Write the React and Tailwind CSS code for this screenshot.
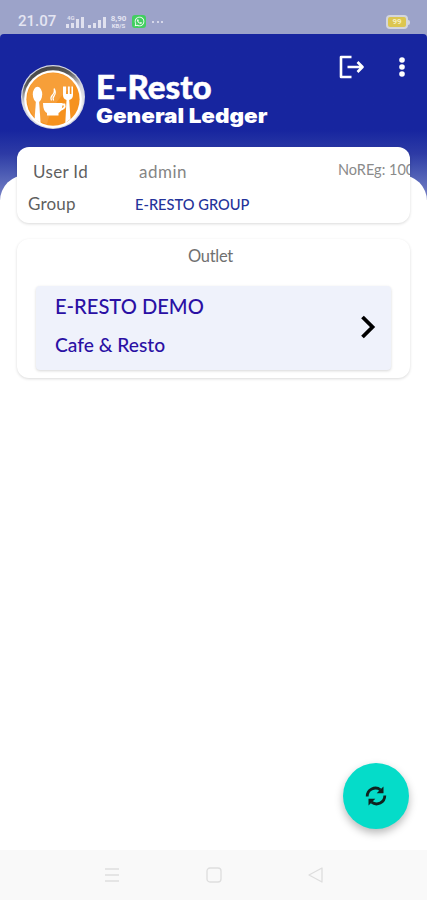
import { FaWhatsapp } from 'react-icons/fa';

function Logo() {
  return (
    <svg viewBox="0 0 66 66" className="h-[66px] w-[66px] shrink-0">
      <defs>
        <linearGradient id="rim" x1="0.2" y1="0" x2="0.5" y2="1">
          <stop offset="0" stopColor="#3f3f3f" />
          <stop offset="0.25" stopColor="#5a5a5a" />
          <stop offset="0.5" stopColor="#d4d4dc" />
          <stop offset="1" stopColor="#fff" />
        </linearGradient>
      </defs>
      <circle cx="33" cy="33" r="32" fill="#d5d7e2" />
      <circle cx="33" cy="33" r="30.8" fill="url(#rim)" />
      <circle cx="33" cy="35" r="28.8" fill="#fff" />
      <circle cx="33" cy="35.2" r="26.6" fill="#f6921e" />
      <path d="M10 23 A26 26 0 0 1 55 21 Q33 35 27 60 A26 26 0 0 1 10 23" fill="#fff" opacity="0.12" />
      <ellipse cx="17.5" cy="30.5" rx="4.7" ry="7.8" fill="#fff" />
      <path d="M16 36h3l1.6 23-6-4z" fill="#fff" />
      <path d="M43 22.5v8.5q0 4 3.5 5L45.3 59l5.2-4-1.3-19q3.8-1 3.8-5v-8.5h-1.6v7.5h-1.6v-7.5h-1.9v7.5h-1.8v-7.5z" fill="#fff" />
      <path d="M23 39h19.5q0 8-4 10v2.5H27V49q-4-2-4-10z" fill="#fff" />
      <path d="M41 40.5h3.5q1.5 4-5 5.5" fill="none" stroke="#fff" strokeWidth="1.8" />
      <path d="M31.5 36.5q-1.5-3 1-5.5t1.6-6.5q2.5 4 0 7.5-1.8 2-.5 4.5" fill="none" stroke="#fff" strokeWidth="1.2" />
    </svg>
  );
}

function Signal({ bars, dotted }) {
  return (
    <svg viewBox="0 0 19 14" className="h-[14px] w-[19px]" fill="#e0e1ef">
      {bars.map((h, i) => (
        <rect key={i} x={i * 5} y={13 - h} width="3" height={h} />
      ))}
      {dotted ? (
        <text x="1" y="5" fontSize="6" fontWeight="700" fontFamily="Roboto, sans-serif">4G</text>
      ) : null}
    </svg>
  );
}

function StatusBar() {
  return (
    <div className="flex h-[34px] items-end justify-between bg-[#9ca3c9] pr-[17px] pb-[5px] pl-[18px]">
      <div className="flex h-[15px] items-center text-[#e4e5f2]">
        <span className="w-[48px] text-[15px] leading-none font-medium [font-family:Roboto,sans-serif]">21.07</span>
        <Signal bars={[4, 5, 9, 11]} dotted />
        <span className="w-[3px]" />
        <Signal bars={[3, 5, 8, 11]} />
        <span className="ml-[3px] flex w-[17px] flex-col items-center text-[8px] leading-[8px] font-bold [font-family:Roboto,sans-serif]">
          <span>8,90</span>
          <span className="text-[6px] leading-[6px]">KB/S</span>
        </span>
        <span className="ml-[5px] flex h-[13px] w-[14px] items-center justify-center rounded-[3px] bg-[#42cf61] text-white">
          <FaWhatsapp className="h-[11px] w-[11px]" />
        </span>
        <span className="ml-[6px] flex gap-[2.5px]">
          <i className="h-[2px] w-[2px] bg-[#d5d7e9]" />
          <i className="h-[2px] w-[2px] bg-[#d5d7e9]" />
          <i className="h-[2px] w-[2px] bg-[#d5d7e9]" />
        </span>
      </div>
      <div className="flex items-center">
        <div className="flex h-[14px] w-[22px] items-center justify-center rounded-[4px] border-2 border-[#d4d6dc] bg-[#dcc650] text-[8px] leading-none font-bold text-[#f6efbf] [font-family:Roboto,sans-serif]">
          99
        </div>
        <div className="h-[5px] w-[2px] rounded-r bg-[#d4d6dc]" />
      </div>
    </div>
  );
}

function Header() {
  return (
    <header className="flex h-[166px] items-start rounded-t-[4px] bg-linear-to-b from-[#17259f] from-58% via-[#2d3aa5] via-72% to-[#7b84c6] pl-[20px] text-white">
      <div className="mt-[30px]">
        <Logo />
      </div>
      <div className="mt-[36px] ml-[10px] w-[180px] whitespace-nowrap">
        <h1 className="origin-left scale-x-[1.035] text-[32px] leading-[34px] font-black [font-family:Lato,sans-serif] [-webkit-text-stroke:0.5px_white]">E-Resto</h1>
        <p className="origin-left scale-x-[1.125] text-[20px] leading-[24px] font-black [font-family:Inter,sans-serif]">General Ledger</p>
      </div>
      <button type="button" aria-label="Logout" className="mt-[21px] ml-[63px]">
        <svg viewBox="0 0 25 24" className="h-[24px] w-[25px]" fill="none" stroke="#fff" strokeWidth="2.6" strokeLinejoin="round">
          <path d="M12.5 2H2v20h10.5M8.5 12H23M18.5 7l5 5-5 5" />
        </svg>
      </button>
      <button type="button" aria-label="Menu" className="mt-[22px] ml-[34px]">
        <svg viewBox="0 0 8 22" className="h-[22px] w-[8px]" fill="#fff">
          <circle cx="4" cy="4" r="2.8" />
          <circle cx="4" cy="11" r="2.8" />
          <circle cx="4" cy="18" r="2.8" />
        </svg>
      </button>
    </header>
  );
}

function UserCard() {
  return (
    <section className="h-[76px] overflow-hidden rounded-[12px] bg-white pt-[9px] whitespace-nowrap text-[#5f5f5f] shadow-[0_1px_3px_rgba(0,0,0,0.15)]">
      <div className="flex h-[32px] items-center text-[17px]">
        <span className="w-[105px] shrink-0 pl-[16px] tracking-[0.35px]">User Id</span>
        <span className="w-[200px] shrink-0 pl-[17px] tracking-[0.5px] text-[#858585]">admin</span>
        <span className="mb-[5px] shrink-0 pl-[16px] text-[14.5px] text-[#8a8a8a]">NoREg: 100</span>
      </div>
      <div className="flex h-[32px] items-center">
        <span className="w-[118px] shrink-0 pl-[11px] text-[17px] tracking-[0.2px]">Group</span>
        <span className="origin-left scale-x-[0.915] text-[16px] font-medium text-[#24339a]">E-RESTO GROUP</span>
      </div>
    </section>
  );
}

function OutletCard() {
  return (
    <section className="mt-[16px] h-[139px] rounded-[12px] bg-white px-[19px] shadow-[0_1px_3px_rgba(0,0,0,0.15)]">
      <h2 className="flex h-[47px] items-start justify-center pt-[5px] pr-[6px] text-[16.5px] tracking-[-0.3px] text-[#707070]">Outlet</h2>
      <button
        type="button"
        className="flex h-[84px] w-full items-center justify-between rounded-[4px] bg-[#eff2fb] pr-[15px] pl-[19px] text-left text-[#2a10a4] shadow-[0_1px_3px_rgba(0,0,0,0.16)]"
      >
        <span className="mb-[6px] flex flex-col whitespace-nowrap">
          <span className="origin-left scale-x-[0.915] text-[22px] leading-[38px] font-medium">E-RESTO DEMO</span>
          <span className="origin-left scale-x-[0.96] text-[20px] leading-[38px] font-medium">Cafe &amp; Resto</span>
        </span>
        <svg viewBox="0 0 16 24" className="mb-[2px] h-[24px] w-[16px]" fill="none" stroke="#000" strokeWidth="3.8">
          <path d="M2.5 2L12.5 12 2.5 22" />
        </svg>
      </button>
    </section>
  );
}

function NavBar() {
  return (
    <nav className="flex h-[50px] items-center justify-center gap-[86px] bg-[#f9f9f9]">
      <svg viewBox="0 0 16 16" className="h-4 w-4" fill="none" stroke="#dedede" strokeWidth="1.3">
        <path d="M1 2h14M1 8h14M1 14h14" />
      </svg>
      <svg viewBox="0 0 16 16" className="h-4 w-4" fill="none" stroke="#dedede" strokeWidth="1.3">
        <rect x="1" y="1" width="14" height="14" rx="3" />
      </svg>
      <svg viewBox="0 0 16 16" className="h-4 w-4" fill="none" stroke="#dedede" strokeWidth="1.3" strokeLinejoin="round">
        <path d="M14 1v14L1 8z" />
      </svg>
    </nav>
  );
}

export default function App() {
  return (
    <div className="flex h-[900px] w-[427px] flex-col overflow-hidden bg-white [font-family:Lato,sans-serif]">
      <div className="bg-[#9ca3c9]">
        <StatusBar />
        <Header />
      </div>
      <main className="relative -mt-[25px] flex-1 rounded-t-[26px] bg-white px-[17px]">
        <div className="-mt-[28px]">
          <UserCard />
          <OutletCard />
        </div>
        <button
          type="button"
          aria-label="Refresh"
          className="absolute right-[18.5px] bottom-[21px] flex h-[66px] w-[66px] items-center justify-center rounded-full bg-[#05dcc9] shadow-[0_4px_9px_rgba(0,0,0,0.28)]"
        >
          <svg viewBox="0 0 22 22" className="h-[22px] w-[22px]" fill="none" stroke="#10221f" strokeWidth="2.8">
            <path d="M2.2 11.5A8.3 8.3 0 0 1 15.5 4.8M19.8 10.5A8.3 8.3 0 0 1 6.5 17.2" />
            <path d="M18.5 1.5v6.8h-6.8zM3.5 20.5v-6.8h6.8z" fill="#10221f" stroke="none" />
          </svg>
        </button>
      </main>
      <NavBar />
    </div>
  );
}
